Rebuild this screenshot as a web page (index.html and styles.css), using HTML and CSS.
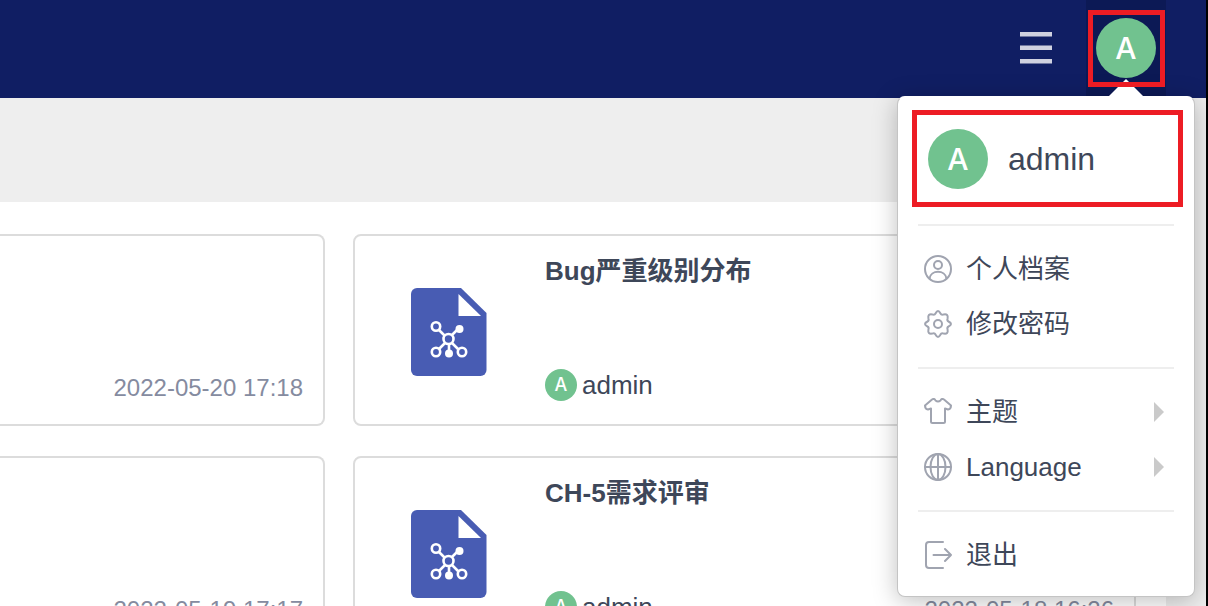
FILE: index.html
```html
<!DOCTYPE html>
<html lang="zh-CN">
<head>
<meta charset="utf-8">
<title>admin</title>
<link rel="stylesheet" href="styles.css">
</head>
<body>
<svg class="sprite" aria-hidden="true">
  <symbol id="mindmap-file" viewBox="0 0 76 88">
    <path fill="#485cb3" d="M6 0H50L75.500 25V82a6 6 0 0 1-6 6H6a6 6 0 0 1-6-6V6a6 6 0 0 1 6-6z"/>
    <path fill="#fff" d="M47.500 6V28H70z"/>
    <g fill="none" stroke="#fff" stroke-width="2.600">
      <path d="M28 42l6 6M41 47l5-5M34 55l-6 6M41 55l6 6M38 56v6"/>
      <circle cx="37.500" cy="51" r="5"/>
      <circle cx="25" cy="38.500" r="4.200"/>
      <circle cx="25" cy="64" r="4.200"/>
      <circle cx="51" cy="64" r="4.200"/>
    </g>
    <circle cx="48.500" cy="41" r="4" fill="#fff"/>
    <circle cx="38" cy="65.500" r="4" fill="#fff"/>
  </symbol>
</svg>
<div class="app">
  <header class="topbar">
    <button class="menu-button" type="button" aria-label="菜单">
      <svg viewBox="0 0 32 32" width="32" height="32"><path fill="#cfd1e0" d="M0 0h32v4.500H0zM0 13.500h32v4.500H0zM0 27h32v4.500H0z"/></svg>
    </button>
    <div class="account">
      <button class="account-button" type="button" aria-label="admin"><span class="avatar">A</span></button>
      <nav class="dropdown">
        <a class="profile" href="#"><span class="avatar">A</span><span>admin</span></a>
        <ul class="group">
          <li><a class="item" href="#">
            <svg class="icon" viewBox="0 0 28 28"><circle cx="14" cy="14" r="13"/><circle cx="14" cy="10" r="4"/><path d="M5.500 23.500c1.200-9 15.800-9 17 0"/></svg>
            <span>个人档案</span></a></li>
          <li><a class="item" href="#">
            <svg class="icon" viewBox="0 0 28 28"><circle cx="14" cy="14" r="4"/><path d="M11.500 3.500Q14 -1.500 16.500 3.500Q17.300 5.200 19.700 4.400Q24.500 3.500 23.600 8.300Q22.800 10.700 24.500 11.500Q29.500 14 24.500 16.500Q22.800 17.300 23.600 19.700Q24.500 24.500 19.700 23.600Q17.300 22.800 16.500 24.500Q14 29.500 11.500 24.500Q10.700 22.800 8.300 23.600Q3.500 24.500 4.400 19.700Q5.200 17.300 3.500 16.500Q-1.500 14 3.500 11.500Q5.200 10.700 4.400 8.300Q3.500 3.500 8.300 4.400Q10.700 5.200 11.500 3.500z"/></svg>
            <span>修改密码</span></a></li>
        </ul>
        <ul class="group">
          <li><a class="item" href="#">
            <svg class="icon" viewBox="0 0 28 28"><path d="M8 1.500L1 7.500Q1 11 4 11.500L7 10.500V23.500Q7 25 8.500 25H19.500Q21 25 21 23.500V10.500L24 11.500Q27 11 27 7.500L20 1.500Q17.500 0 16.500 2.500Q14 4.500 11.500 2.500Q10.500 0 8 1.500z"/></svg>
            <span>主题</span>
            <svg class="caret" viewBox="0 0 10 20"><path d="M0 0L10 10L0 20z"/></svg></a></li>
          <li><a class="item" href="#">
            <svg class="icon" viewBox="0 0 28 28"><circle cx="14" cy="14" r="13"/><ellipse cx="14" cy="14" rx="7.500" ry="13"/><path d="M14 1V27M1 14H27"/></svg>
            <span>Language</span>
            <svg class="caret" viewBox="0 0 10 20"><path d="M0 0L10 10L0 20z"/></svg></a></li>
        </ul>
        <ul class="group">
          <li><a class="item" href="#">
            <svg class="icon" viewBox="0 0 28 28"><path d="M19 1H5Q2 1 2 4V24Q2 27 5 27H19M9.500 14H27M21 8l6 6-6 6"/></svg>
            <span>退出</span></a></li>
        </ul>
      </nav>
    </div>
  </header>
  <main class="board">
    <div class="cards">
      <article class="card card-cut"><time>2022-05-20 17:18</time></article>
      <article class="card">
        <svg class="file-icon" viewBox="0 0 76 88"><use href="#mindmap-file"/></svg>
        <div class="card-body">
          <h2>Bug严重级别分布</h2>
          <div class="card-foot"><span class="avatar avatar-small">A</span><span>admin</span></div>
        </div>
      </article>
      <article class="card card-cut"><time>2022-05-19 17:17</time></article>
      <article class="card">
        <svg class="file-icon" viewBox="0 0 76 88"><use href="#mindmap-file"/></svg>
        <div class="card-body">
          <h2>CH-5需求评审</h2>
          <div class="card-foot"><span class="avatar avatar-small">A</span><span>admin</span></div>
        </div>
        <time>2022-05-18 16:26</time>
      </article>
    </div>
  </main>
</div>
</body>
</html>
```
FILE: styles.css
```css
*, *::before, *::after { box-sizing: border-box; }

body {
  margin: 0;
  font: 26px/40px "Liberation Sans", "Noto Sans CJK SC", sans-serif;
  color: #3e4759;
}

button {
  border: 0;
  padding: 0;
  background: none;
  font: inherit;
  color: inherit;
}

a { color: inherit; text-decoration: none; }
ul { margin: 0; padding: 0; list-style: none; }
.sprite { display: none; }

.app {
  display: flex;
  flex-direction: column;
  height: 100vh;
  overflow: hidden;
  border-right: 2px solid #000;
  background: #eee;
}

.topbar {
  display: flex;
  flex: none;
  justify-content: flex-end;
  gap: 34px;
  height: 98px;
  padding-right: 40px;
  background: #101e63;
}

.menu-button { padding-bottom: 2px; }
.menu-button svg { display: block; }

.account {
  position: relative;
  z-index: 1;
  width: 80px;
  background: #0c1955;
}

.account-button {
  display: flex;
  width: 100%;
  padding: 18px 10px;
}

.avatar {
  display: flex;
  flex: none;
  align-items: center;
  justify-content: center;
  width: 60px;
  height: 60px;
  border-radius: 50%;
  background: #71c28f;
  color: #fff;
  font: 500 30px/30px Inter, sans-serif;
}

.avatar-small {
  width: 32px;
  height: 32px;
  font-size: 18px;
}

/* Highlight frames */
.account::after {
  content: "";
  position: absolute;
  top: 10px;
  left: 2px;
  width: 77px;
  height: 77px;
  border: 5px solid #ed1c24;
  pointer-events: none;
}

.profile {
  display: flex;
  align-items: center;
  gap: 20px;
  height: 97px;
  margin: 13px 11px 17px 14px;
  padding-left: 11px;
  border: 5px solid #ed1c24;
  font-size: 32px;
}

.dropdown {
  position: absolute;
  top: 96px;
  right: -29px;
  width: 298px;
  padding-bottom: 14px;
  border: 1px solid #c4c4c4;
  border-top-color: #fff;
  border-radius: 8px;
  background: #fff;
  box-shadow: 0 4px 24px rgba(0, 0, 0, 0.25);
}

.dropdown::before {
  content: "";
  position: absolute;
  right: 50px;
  bottom: 100%;
  border: 18px solid transparent;
  border-top-width: 0;
  border-bottom-color: #fff;
}

.group {
  margin: 0 20px;
  padding: 15px 0 16px;
  border-top: 2px solid #eee;
}

.group:last-child { padding-bottom: 0; }

.item {
  display: flex;
  align-items: center;
  gap: 14px;
  height: 55px;
  padding: 0 10px 0 6px;
}

.icon {
  width: 28px;
  height: 28px;
  fill: none;
  stroke: #a0a4b0;
  stroke-width: 2;
  stroke-linejoin: round;
  stroke-linecap: round;
}

.caret {
  width: 10px;
  height: 20px;
  margin-left: auto;
  fill: #cacaca;
}

.board {
  flex: none;
  margin: 104px 40px 0 0;
  padding: 32px 30px 32px 0;
  background: #fff;
}

.cards {
  display: grid;
  grid-template-columns: 325px 1fr;
  gap: 30px 28px;
}

.card {
  display: flex;
  min-height: 192px;
  padding: 15px 20px 16px 56px;
  border: 2px solid #dcdcdc;
  border-radius: 8px;
}

.card-cut {
  padding-left: 20px;
  border-left: 0;
  border-top-left-radius: 0;
  border-bottom-left-radius: 0;
}

.file-icon {
  flex: none;
  align-self: center;
  width: 76px;
  height: 88px;
  margin-top: 5px;
}

.card-body {
  display: flex;
  flex-direction: column;
  justify-content: space-between;
  margin-left: 58px;
}

h2 { margin: 0; font-size: 26px; line-height: 40px; }

.card-foot {
  display: flex;
  align-items: center;
  gap: 5px;
  padding-bottom: 3px;
}

time {
  align-self: flex-end;
  margin-left: auto;
  color: #858ba0;
  font-size: 24px;
}
```
